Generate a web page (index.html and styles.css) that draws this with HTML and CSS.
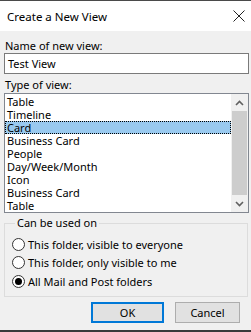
FILE: index.html
```html
<!DOCTYPE html>
<html>
<head>
<meta charset="utf-8">
<link rel="stylesheet" href="styles.css">
</head>
<body>
<div class="window">
  <div class="titlebar">
    <span class="title">Create a New View</span>
    <svg class="close" width="12" height="12" viewBox="0 0 12 12"><path d="M0.5 0.5 L11.5 11.5 M11.5 0.5 L0.5 11.5" stroke="#222" stroke-width="1" fill="none"/></svg>
  </div>
  <div class="content">
    <div class="label">Name of new view:</div>
    <div class="textbox">Test View</div>
    <div class="label label2">Type of view:</div>
    <div class="listbox">
      <div class="items">
        <div class="item">Table</div>
        <div class="item">Timeline</div>
        <div class="item selected">Card</div>
        <div class="item">Business Card</div>
        <div class="item">People</div>
        <div class="item">Day/Week/Month</div>
        <div class="item">Icon</div>
        <div class="item">Business Card</div>
        <div class="item">Table</div>
      </div>
      <div class="scrollbar">
        <div class="arrow"><svg width="9" height="6" viewBox="0 0 9 6"><path d="M1 5 L4.5 1.5 L8 5" stroke="#606060" stroke-width="1.6" fill="none"/></svg></div>
        <div class="thumb"></div>
        <div class="arrow"><svg width="9" height="6" viewBox="0 0 9 6"><path d="M1 1 L4.5 4.5 L8 1" stroke="#606060" stroke-width="1.6" fill="none"/></svg></div>
      </div>
    </div>
    <fieldset class="group">
      <legend>Can be used on</legend>
      <div class="radio"><span class="dot"></span>This folder, visible to everyone</div>
      <div class="radio"><span class="dot"></span>This folder, only visible to me</div>
      <div class="radio"><span class="dot checked"></span>All Mail and Post folders</div>
    </fieldset>
    <div class="buttons">
      <div class="btn default">OK</div>
      <div class="btn">Cancel</div>
    </div>
  </div>
</div>
</body>
</html>
```
FILE: styles.css
```css
html, body {
  margin: 0;
  padding: 0;
}
body {
  width: 251px;
  height: 332px;
  overflow: hidden;
  background: #f0f0f0;
  font-family: "Noto Sans", "Open Sans", sans-serif;
  font-size: 11px;
  color: #000;
}
.window {
  height: 332px;
  border-top: 1px solid #4a4a4a;
  border-bottom: 2px solid #3a3a3a;
  box-sizing: border-box;
  background: #f0f0f0;
  display: flex;
  flex-direction: column;
}
.titlebar {
  height: 30px;
  background: #fff;
  display: flex;
  align-items: center;
  justify-content: space-between;
  padding: 0 6px 0 7px;
  flex: none;
}
.title {
  font-size: 11.5px;
  color: #000;
}
.content {
  padding: 7px 2px 0 4px;
  display: flex;
  flex-direction: column;
}
.label {
  line-height: 15px;
  padding-left: 1px;
}
.label2 {
  margin-top: 3px;
}
.textbox {
  height: 19px;
  border: 1px solid #7a7a7a;
  background: #fff;
  line-height: 19px;
  padding-left: 3px;
}
.listbox {
  margin-top: 1px;
  height: 118px;
  border: 1px solid #828790;
  background: #fff;
  display: flex;
}
.items {
  flex: 1;
  padding-top: 1px;
}
.item {
  height: 13px;
  line-height: 13px;
  padding-left: 2px;
  box-sizing: border-box;
}
.item.selected {
  background: #99c9ef;
  outline: 1px dotted #000;
  outline-offset: -1px;
}
.scrollbar {
  width: 17px;
  background: #f0f0f0;
  display: flex;
  flex-direction: column;
}
.arrow {
  height: 17px;
  display: flex;
  align-items: center;
  justify-content: center;
}
.thumb {
  flex: 1;
  margin: 0 1px;
  background: #cdcdcd;
}
.group {
  margin: 3px 1px 0 0;
  padding: 5px 0 5px 7px;
  border: 1px solid #dcdcdc;
  border-radius: 0;
}
.group legend {
  padding: 0 2px;
  margin-left: 3px;
  line-height: 14px;
}
.radio {
  display: flex;
  align-items: center;
  height: 18.5px;
  gap: 3px;
}
.dot {
  width: 11px;
  height: 11px;
  border: 1px solid #333;
  border-radius: 50%;
  background: #fff;
  position: relative;
  flex: none;
}
.dot.checked::after {
  content: "";
  position: absolute;
  left: 2px;
  top: 2px;
  width: 7px;
  height: 7px;
  border-radius: 50%;
  background: #000;
}
.buttons {
  display: flex;
  justify-content: flex-end;
  gap: 11px;
  margin-top: 5px;
  padding-right: 9px;
}
.btn {
  width: 73px;
  height: 21px;
  line-height: 19px;
  text-align: center;
  background: #e1e1e1;
  border: 1px solid #adadad;
  box-sizing: border-box;
}
.btn.default {
  border: 2px solid #0078d7;
  line-height: 17px;
}
.btn + .btn {
  width: 65px;
}
```
